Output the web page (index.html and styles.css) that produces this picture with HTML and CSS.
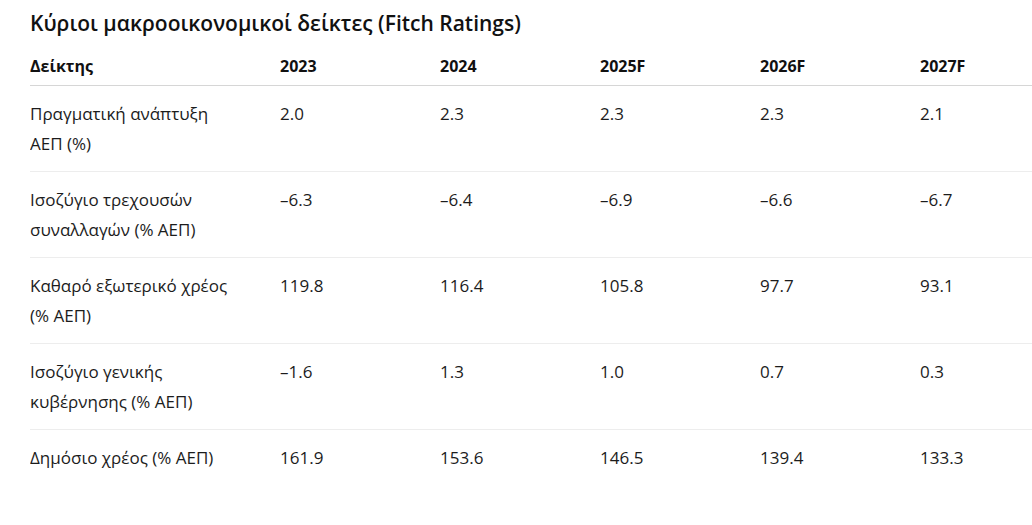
FILE: index.html
```html
<!DOCTYPE html>
<html lang="el">
<head>
<meta charset="utf-8">
<title>Κύριοι μακροοικονομικοί δείκτες</title>
<link rel="stylesheet" href="styles.css">
</head>
<body>
<div class="page">
  <h2 class="title">Κύριοι μακροοικονομικοί δείκτες (Fitch Ratings)</h2>
  <div class="table-wrap">
    <table class="data">
      <colgroup>
        <col class="c-label"><col class="c-num"><col class="c-num"><col class="c-num"><col class="c-num"><col class="c-num">
      </colgroup>
      <thead>
        <tr><th>Δείκτης</th><th>2023</th><th>2024</th><th>2025F</th><th>2026F</th><th>2027F</th></tr>
      </thead>
      <tbody>
        <tr><td>Πραγματική ανάπτυξη ΑΕΠ (%)</td><td>2.0</td><td>2.3</td><td>2.3</td><td>2.3</td><td>2.1</td></tr>
        <tr><td>Ισοζύγιο τρεχουσών συναλλαγών (% ΑΕΠ)</td><td>–6.3</td><td>–6.4</td><td>–6.9</td><td>–6.6</td><td>–6.7</td></tr>
        <tr><td>Καθαρό εξωτερικό χρέος (% ΑΕΠ)</td><td>119.8</td><td>116.4</td><td>105.8</td><td>97.7</td><td>93.1</td></tr>
        <tr><td>Ισοζύγιο γενικής κυβέρνησης (% ΑΕΠ)</td><td>–1.6</td><td>1.3</td><td>1.0</td><td>0.7</td><td>0.3</td></tr>
        <tr><td>Δημόσιο χρέος (% ΑΕΠ)</td><td>161.9</td><td>153.6</td><td>146.5</td><td>139.4</td><td>133.3</td></tr>
      </tbody>
    </table>
  </div>
</div>
</body>
</html>
```
FILE: styles.css
```css
html, body {
  margin: 0;
  padding: 0;
  background: #ffffff;
  overflow: hidden;
}
body {
  font-family: "Open Sans", "Noto Sans", sans-serif;
  color: #1c1c1c;
}
.page {
  padding: 8px 0 0 30px;
}
.title {
  margin: 0;
  font-size: 21px;
  font-weight: 600;
  line-height: 30px;
  color: #111111;
}
.table-wrap {
  width: 1002px;
  overflow: hidden;
}
.data {
  border-collapse: collapse;
  table-layout: fixed;
  width: 1050px;
  font-size: 17px;
}
.c-label { width: 250px; }
.c-num { width: 160px; }
.data th {
  text-align: left;
  font-weight: 700;
  font-size: 16px;
  line-height: 24px;
  padding: 16px 20px 7px 0;
  border-bottom: 1px solid #d6d6d6;
  color: #111111;
}
.data th:first-child,
.data td:first-child {
  padding-right: 40px;
}
.data td {
  text-align: left;
  vertical-align: top;
  line-height: 30px;
  padding: 13px 20px 12px 0;
  border-bottom: 1px solid #ededed;
}
.data tbody tr:last-child td {
  border-bottom: none;
}
```
